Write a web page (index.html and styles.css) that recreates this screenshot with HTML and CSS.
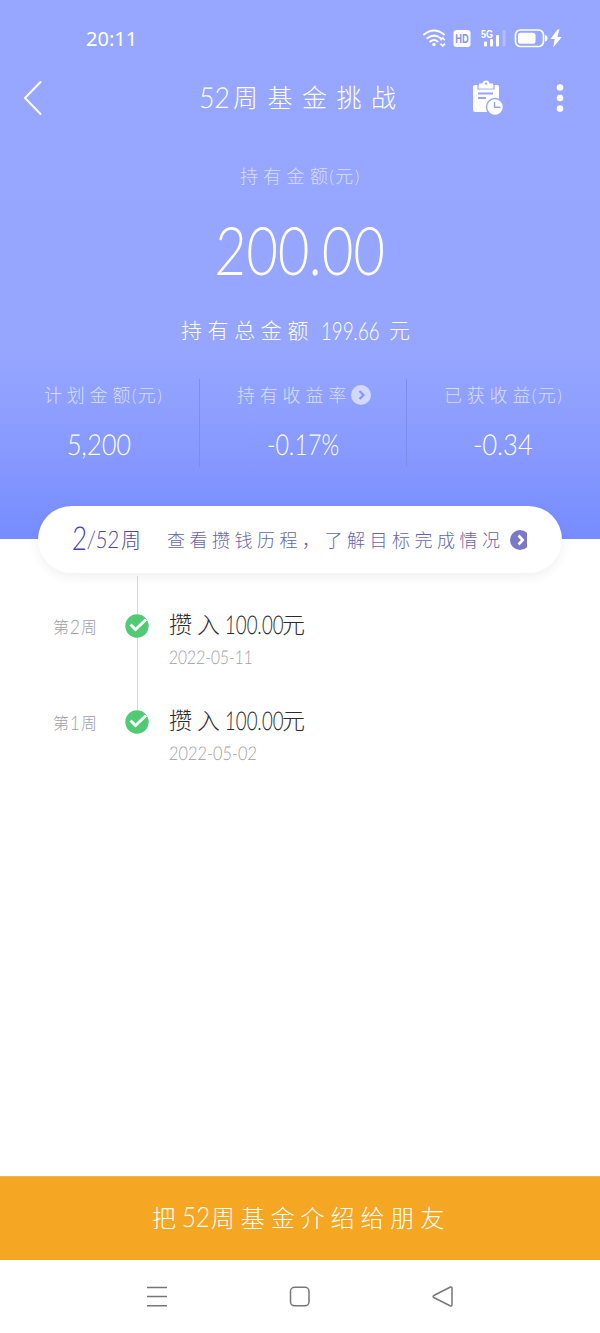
FILE: index.html
```html
<!DOCTYPE html>
<html lang="zh-CN">
<head>
<meta charset="utf-8">
<title>52周基金挑战</title>
<link rel="stylesheet" href="styles.css">
</head>
<body>
<main class="screen">
  <section class="hero">
    <div class="status">
      <span class="clock">20:11</span>
      <svg class="status-icons" width="142" height="24" viewBox="0 0 142 24" fill="none" stroke="#fff">
        <g stroke-width="2" stroke-linecap="round"><path d="M2 8.500Q12 .5 22 8.500M5.300 12.200Q12 7 18.700 12.200M8.300 15.500Q12 12.600 15.500 15.500"/></g>
        <circle cx="12" cy="18.500" r="1.700" fill="#fff" stroke="none"/>
        <path d="M18.500 14.300l2.200-2.400 2.200 2.400M18.500 17.600l2.200 2.400 2.200-2.400" stroke-width="1.700"/>
        <rect x="31.500" y="4" width="17" height="17" rx="3" fill="#fff" stroke="none"/>
        <text class="hd" x="33.200" y="16.800" textLength="13.500" lengthAdjust="spacingAndGlyphs">HD</text>
        <text class="net" x="59" y="11.800" textLength="12" lengthAdjust="spacingAndGlyphs">5G</text>
        <g fill="#fff" stroke="none"><rect x="62" y="15.500" width="3" height="5" rx="1"/><rect x="68" y="13" width="3" height="7.500" rx="1"/><rect x="74" y="9" width="3" height="11.500" rx="1"/><rect x="80.500" y="4" width="3" height="16.500" rx="1" opacity=".25"/></g>
        <rect x="93.500" y="4" width="28" height="16.500" rx="5" stroke-width="1.700"/>
        <rect x="96" y="6.700" width="17.500" height="11" rx="2.500" fill="#fff" stroke="none"/>
        <path d="M123.500 9.500c2 0 2 5.500 0 5.500z" fill="#fff"/>
        <path d="M135.500 3.500L128.500 13h4.200l-1.500 8.500 8.500-10.500h-4.300l2-7.500z" fill="#fff" stroke="none"/>
      </svg>
    </div>
    <header class="nav">
      <svg class="back" width="20" height="36" viewBox="0 0 20 36"><path d="M17.500 2L2 18l15.500 16" fill="none" stroke="#fff" stroke-width="2" stroke-linecap="round" stroke-linejoin="round"/></svg>
      <h1 class="title"><span class="n n-title"><i>52</i></span>周基金挑战</h1>
      <svg class="plan" width="34" height="36" viewBox="0 0 34 36">
        <path d="M3 5h22q2 0 2 2v12c-6 0-11 4-11 10l1 3H3q-2 0-2-2V7q0-2 2-2z" fill="#fff"/>
        <path d="M6 3.500v5.500h16V3.500" fill="none" stroke="#96a6ff" stroke-width="1.200"/>
        <path d="M7 3.500h3.500Q11 .5 14 .5t3.500 3H21v4.700H7z" fill="#fff"/><circle cx="14" cy="3.600" r="1.200" fill="#96a6ff"/>
        <path d="M6 13.500h15M6 18h8" stroke="#96a6ff" stroke-width="1.900" fill="none"/>
        <circle cx="23" cy="27" r="8.500" fill="#fff" stroke="#96a6ff" stroke-width="1.400"/>
        <path d="M22.500 22v5.300h6" fill="none" stroke="#96a6ff" stroke-width="1.400"/>
      </svg>
      <svg class="more" width="8" height="30" viewBox="0 0 8 30" fill="#fff"><circle cx="4" cy="4.500" r="3.300"/><circle cx="4" cy="15" r="3.300"/><circle cx="4" cy="25.600" r="3.300"/></svg>
    </header>
    <div class="held-label">持有金<span class="t">额(元)</span></div>
    <div class="held"><span class="n n-held"><i>200.00</i></span></div>
    <div class="total">持有总金额<span class="n n-total"><i>199.66</i></span>元</div>
    <div class="stats">
      <div class="stat stat-a"><div class="label">计划金<span class="t">额(元)</span></div><span class="n n-plan"><i>5,200</i></span></div>
      <div class="stat stat-b"><div class="label">持有收益率<svg width="20" height="20" viewBox="0 0 20 20"><circle cx="10" cy="10" r="10" fill="#d2d8ff"/><path d="M8.500 6l4 4-4 4" fill="none" stroke="#8598f8" stroke-width="2.200"/></svg></div><span class="n n-rate"><i>-0.17%</i></span></div>
      <div class="stat stat-c"><div class="label">已获收<span class="t">益(元)</span></div><span class="n n-gain"><i>-0.34</i></span></div>
    </div>
  </section>
  <a class="pill">
    <span class="n n-week"><i>2</i></span><span class="n n-weeks"><i>/52</i></span><span class="unit">周</span>
    <span class="journey">查看攒钱历程，了解目标完成情况</span>
    <svg width="17" height="20" viewBox="0 0 17 20"><circle cx="10" cy="10" r="10" fill="#7b78c8"/><path d="M8.500 5.500l4.200 4.500-4.200 4.500" fill="none" stroke="#fff" stroke-width="2.600"/></svg>
  </a>
  <section class="timeline">
    <article class="entry">
      <div class="week">第<span class="n n-index"><i>2</i></span>周</div>
      <div class="rail"><svg width="24" height="24" viewBox="0 0 24 24"><circle cx="12" cy="12" r="11.700" fill="#50cb74"/><path d="M5.500 10.500l5 5L21 5.500" fill="none" stroke="#fff" stroke-width="3"/></svg></div>
      <div class="detail"><div class="amount">攒入<span class="n n-amount"><i>100.00</i></span>元</div><span class="n n-date d11"><i>2022-05-11</i></span></div>
    </article>
    <article class="entry last">
      <div class="week">第<span class="n n-index"><i>1</i></span>周</div>
      <div class="rail"><svg width="24" height="24" viewBox="0 0 24 24"><circle cx="12" cy="12" r="11.700" fill="#50cb74"/><path d="M5.500 10.500l5 5L21 5.500" fill="none" stroke="#fff" stroke-width="3"/></svg></div>
      <div class="detail"><div class="amount">攒入<span class="n n-amount"><i>100.00</i></span>元</div><span class="n n-date"><i>2022-05-02</i></span></div>
    </article>
  </section>
  <div class="share">把<span class="n n-share"><i>52</i></span>周基金介绍给朋友</div>
  <nav class="system">
    <svg width="22" height="22" viewBox="0 0 22 22"><path d="M1 1.500h20M1 10.500h20M1 19.700h20"/></svg>
    <svg width="22" height="22" viewBox="0 0 22 22"><rect x="1.500" y="1.300" width="18.500" height="18.500" rx="4"/></svg>
    <svg width="22" height="22" viewBox="0 0 22 22"><path d="M1.800 9.500L18 1.300q2-.8 2 1.200v16q0 2-2 1.200L1.800 11.500q-1.500-1 0-2z"/></svg>
  </nav>
</main>
</body>
</html>
```
FILE: styles.css
```css
* { box-sizing: border-box; }
body { margin: 0; background: #fff; font-family: Lato, "Noto Sans CJK SC", sans-serif; font-weight: 300; }
svg { display: block; flex: none; }
.screen { width: 600px; height: 1333px; display: flex; flex-direction: column; overflow: hidden; }
.hero { height: 539px; flex: none; color: #fff; background: linear-gradient(#97a7ff 0, #96a6ff 350px, #8799ff 455px, #768cff 539px); }

/* Narrow figures: the outer box has the drawn width, the inner text is squeezed into it */
.n { display: inline-block; flex: none; white-space: nowrap; letter-spacing: 0; }
.n i { display: inline-block; font-style: normal; transform-origin: 0 50%; transform: scaleX(var(--s)) skewX(-2deg); }

.status { height: 60px; padding: 26px 36px 0 86px; display: flex; justify-content: space-between; }
.clock { font: 400 20px/26px "Noto Sans", sans-serif; }
.hd, .net { font-family: "Liberation Sans", sans-serif; font-weight: 700; stroke: none; }
.hd { font-size: 12.5px; fill: #8495ee; }
.net { font-size: 11px; fill: #fff; }

.nav { height: 76px; padding: 0 36px 0 23px; display: flex; align-items: center; }
.title { display: flex; margin: 0 0 0 156px; width: 276px; font-size: 25px; line-height: 38px; height: 40px; font-weight: 300; letter-spacing: 9.500px; white-space: nowrap; }
.n-title { --s: .92; width: 34px; font-size: 29px; }
.plan { margin-right: 50px; }

.held-label { height: 78px; padding: 25px 0 0 240px; display: flex; font-size: 18px; line-height: 30px; letter-spacing: 5.300px; color: #d8deff; white-space: nowrap; }
.t { letter-spacing: 1.400px; }
.held { height: 92px; padding-left: 215px; line-height: 70px; }
.n-held { --s: .81; width: 172px; font-size: 67px; }
.total { height: 73px; padding: 9px 0 0 181px; display: flex; font-size: 21px; line-height: 30px; letter-spacing: 5.600px; white-space: nowrap; }
.n-total { --s: .75; width: 67px; margin: 0 1px 0 7px; font-size: 25px; }

.stats { height: 88px; display: flex; }
.stat { height: 88px; display: flex; flex-direction: column; line-height: 32px; }
.stat-a { width: 200px; padding-left: 44px; border-right: 1px solid #7c8eec; }
.stat-b { width: 207px; padding-left: 37px; border-right: 1px solid #7c8eec; }
.stat-c { width: 193px; padding-left: 37px; }
.label { display: flex; align-items: center; height: 32px; font-size: 18px; letter-spacing: 4.800px; color: #d8deff; white-space: nowrap; }
.stat .n { height: 34px; margin-top: 16px; line-height: 34px; font-size: 29px; }
.n-plan { --s: .87; margin-left: 23px; }
.n-rate { --s: .8; margin-left: 30px; }
.n-gain { --s: .88; margin-left: 29px; }

.pill { width: 524px; height: 67px; flex: none; margin: -33px 0 0 38px; padding-left: 34px; display: flex; align-items: center; border-radius: 34px; background: #fff; color: #6865a6; box-shadow: 0 4px 12px rgba(0,0,0,.06); position: relative; line-height: 36px; }
.n-week { --s: .78; width: 15px; font-size: 33px; padding-bottom: 5px; color: #4745a5; }
.n-weeks { --s: .84; width: 34px; font-size: 24px; padding-bottom: 1px; color: #4745a5; }
.unit { width: 46px; font-size: 20px; color: #4745a5; }
.journey { width: 343px; font-size: 18px; letter-spacing: 4.500px; white-space: nowrap; }

.timeline { height: 603px; flex: none; padding-top: 3px; }
.entry { height: 96px; display: flex; }
.week { width: 125px; padding: 36px 0 0 53px; display: flex; font-size: 16px; line-height: 30px; color: #a0a0a8; white-space: nowrap; }
.n-index { --s: .85; width: 11px; margin-left: 1px; font-size: 20px; line-height: 28px; }
.rail { width: 24px; padding-top: 38px; background: linear-gradient(#d8d8d8, #d8d8d8) 12px 0 / 1px 100% no-repeat; }
.last .rail { background-size: 1px 45px; }
.detail { padding: 29px 0 0 20px; color: #292930; }
.amount { display: flex; height: 38px; font-size: 23px; line-height: 38px; letter-spacing: 5px; white-space: nowrap; }
.n-amount { --s: .72; width: 57px; font-size: 26px; }
.n-date { --s: .86; height: 28px; font-size: 19px; line-height: 28px; color: #a0a0a8; }
.d11 { --s: .82; }

.share { height: 84px; flex: none; padding: 0 0 5px 152px; display: flex; align-items: center; background: #f5a623; color: #fff; font-size: 24px; letter-spacing: 5.900px; white-space: nowrap; border-top: 1px solid #f3b34e; }
.n-share { --s: .86; width: 29px; font-size: 28px; }
.system { height: 74px; padding: 0 146px; display: flex; align-items: center; justify-content: space-between; fill: none; stroke: #777; stroke-width: 1.500; }
```
